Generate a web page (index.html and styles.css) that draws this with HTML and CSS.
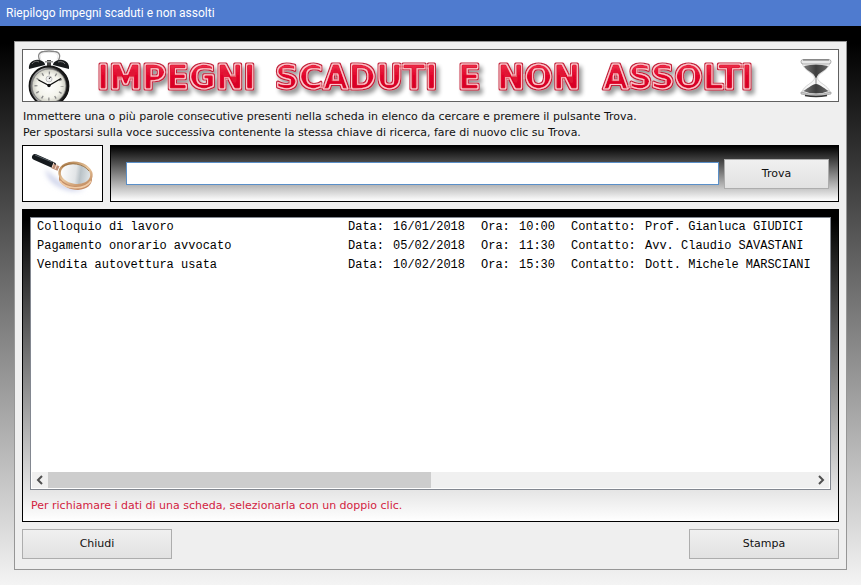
FILE: index.html
```html
<!DOCTYPE html>
<html lang="it">
<head>
<meta charset="utf-8">
<title>Riepilogo impegni scaduti e non assolti</title>
<link rel="stylesheet" href="styles.css">
</head>
<body>
<header class="titlebar">Riepilogo impegni scaduti e non assolti</header>
<main class="backdrop">
  <div class="panel">
    <div class="banner">
      <svg class="clock" viewBox="0 0 44 51" aria-hidden="true">
        <defs>
          <linearGradient id="rim" x1="0" x2="1"><stop offset="0" stop-color="#666"/><stop offset=".3" stop-color="#bbb"/><stop offset=".7" stop-color="#333"/><stop offset="1" stop-color="#111"/></linearGradient>
          <radialGradient id="dial"><stop offset="0" stop-color="#fff"/><stop offset=".7" stop-color="#f3f3eb"/><stop offset="1" stop-color="#ccccc2"/></radialGradient>
        </defs>
        <path d="M13 11C10 5 12 2 17 1.500Q22 .5 27 1.500C33 2 34 6 31 11" fill="none" stroke="#888" stroke-width="1.300"/>
        <path d="M14 10C12 5 14 3 18 2.500h8c4 .5 6 3 4 7" fill="none" stroke="#ddd" stroke-width=".7"/>
        <path d="M20 10h4v6h-4z" fill="#444"/>
        <path d="M18 11h8v1.500h-8z" fill="#999"/>
        <path d="M2 19C1 12 8 8 14 10.500c3 1 4 3 4 4.500z" fill="#171a1c"/>
        <path d="M42 19C43 12 36 8 30 10.500c-3 1-4 3-4 4.500z" fill="#171a1c"/>
        <path d="M5 14c2-3 5-3 7-2M31 12c3-1 6 0 7 2" fill="none" stroke="#777"/>
        <circle cx="22" cy="36" r="20" fill="url(#rim)"/>
        <circle cx="22" cy="36" r="19.500" fill="none" stroke="#151515" stroke-width="1.800"/>
        <circle cx="22" cy="36" r="17" fill="url(#dial)" stroke="#777" stroke-width=".8"/>
        <circle cx="22" cy="36" r="13" fill="none" stroke="#888" stroke-width="3" stroke-dasharray="1.300 5.507" stroke-dashoffset=".65"/>
        <circle cx="22" cy="29" r="3" fill="#eee" stroke="#aaa" stroke-width=".7"/>
        <path d="m22 29 1.500-2" stroke="#222"/>
        <path d="M11.500 30 22 35.500 34 28.500" fill="none" stroke="#111" stroke-width="1.400"/>
        <circle cx="22" cy="35.500" r="1.700" fill="#111"/>
      </svg>
      <svg class="headline" viewBox="0 0 701 51" role="img" aria-label="Impegni scaduti e non assolti">
        <defs>
          <filter id="tube" x="-2%" y="-30%" width="104%" height="180%">
            <feMorphology in="SourceAlpha" operator="erode" radius="1" result="mid"/>
            <feFlood flood-color="#ffc4ce"/><feComposite in2="mid" operator="in" result="line"/>
            <feMorphology in="SourceAlpha" operator="erode" radius="2" result="core"/>
            <feComposite in="SourceGraphic" in2="core" operator="in" result="fill"/>
            <feFlood flood-color="#c4203a"/><feComposite in2="SourceAlpha" operator="in" result="edge"/>
            <feGaussianBlur in="SourceAlpha" stdDeviation="2"/><feOffset dx="3" dy="4"/>
            <feComponentTransfer result="shade"><feFuncA type="linear" slope=".4"/></feComponentTransfer>
            <feMerge><feMergeNode in="shade"/><feMergeNode in="edge"/><feMergeNode in="line"/><feMergeNode in="fill"/></feMerge>
          </filter>
          <linearGradient id="red" x2="0" y2="1"><stop offset="0" stop-color="#f24a5e"/><stop offset=".45" stop-color="#e3052b"/><stop offset="1" stop-color="#c80022"/></linearGradient>
        </defs>
        <text class="headline-text" y="39" filter="url(#tube)"><tspan x="14">IMPEGNI</tspan> <tspan x="192">SCADUTI</tspan> <tspan x="375">E</tspan> <tspan x="414">NON</tspan> <tspan x="520">ASSOLTI</tspan></text>
      </svg>
      <svg class="hourglass" viewBox="0 0 32 40" aria-hidden="true">
        <defs><linearGradient id="sand" x1="0" x2="1"><stop offset="0" stop-color="#777"/><stop offset=".5" stop-color="#3e3e3e"/><stop offset="1" stop-color="#666"/></linearGradient></defs>
        <path d="M2 5C4 13 14 15 14.500 20 14 25 4 27 2 34q14 5 28 0C28 27 18 25 17.500 20 18 15 28 13 30 5z" fill="#f6f6f6" stroke="#ccc" stroke-width=".8"/>
        <path d="M4 8q12-3 24 0C26 13 18 14 16.500 20h-1C14 14 6 13 4 8z" fill="url(#sand)"/>
        <path d="M16 19v9" stroke="#888"/>
        <path d="M3 33c3-1 9-7 13-7s10 6 13 7q-13 5-26 0z" fill="url(#sand)"/>
        <rect x="1" y="1.500" width="30" height="4.500" rx="2.200" fill="#e9e9e9" stroke="#999" stroke-width=".8"/>
        <path d="M3 2h26" stroke="#666"/>
        <path d="M1 34q15 5 30 0v2q-15 4-30 0z" fill="#ccc" stroke="#999" stroke-width=".7"/>
        <path d="M5 37.500q11 2 22 0" fill="none" stroke="#333" stroke-width="1.500"/>
      </svg>
    </div>

    <label class="hint" for="query">Immettere una o più parole consecutive presenti nella scheda in elenco da cercare e premere il pulsante Trova.<br>Per spostarsi sulla voce successiva contenente la stessa chiave di ricerca, fare di nuovo clic su Trova.</label>

    <form class="search-row" onsubmit="return false">
      <div class="lens-box">
        <svg class="lens" viewBox="0 0 79 55" aria-hidden="true">
          <defs>
            <linearGradient id="brass" x2="1" y2="1"><stop offset="0" stop-color="#a87543"/><stop offset=".5" stop-color="#e9c69c"/><stop offset="1" stop-color="#b98055"/></linearGradient>
            <linearGradient id="glass" x1="0" x2="1"><stop offset="0" stop-color="#fff"/><stop offset=".5" stop-color="#e2e5e7"/><stop offset=".65" stop-color="#b9c2c7"/><stop offset="1" stop-color="#e6eaec"/></linearGradient>
            <filter id="soft" x="-30%" y="-30%" width="160%" height="160%"><feGaussianBlur stdDeviation="2.500"/></filter>
          </defs>
          <path d="M22 23q4 18 27 22l13-1-24-7z" fill="#c9cfe8" filter="url(#soft)"/>
          <path d="M12 11 30 19" stroke="#15191d" stroke-width="6" stroke-linecap="round"/>
          <path d="m12 9 17 7" stroke="#59636a"/>
          <path d="m29.500 20 6 2.500" stroke="#bc8b73" stroke-width="5"/>
          <path d="m31 16.500-2 5M34 18l-2 5" stroke="#f3dac9"/>
          <path d="M36 28v6c3 6 11 10 19 10 9-1 14-5 14-11v-5z" fill="#c58e66"/>
          <ellipse cx="52.500" cy="28" rx="16" ry="11" transform="rotate(8 52.500 28)" fill="url(#glass)" stroke="url(#brass)" stroke-width="2.500"/>
          <path d="M37 35c5 8 24 10 31 0" fill="none" stroke="#f0cba6" stroke-width="1.500"/>
          <path d="M39 21c8-6 22-3 27 4" fill="none" stroke="#8f6737" stroke-width=".8"/>
        </svg>
      </div>
      <div class="search-box">
        <input class="query" id="query" type="text" autocomplete="off">
        <button class="btn find" type="submit">Trova</button>
      </div>
    </form>

    <section class="results">
      <div class="listbox">
        <table class="items">
          <tbody>
            <tr><td class="subject">Colloquio di lavoro</td><td class="key-date">Data:</td><td class="date">16/01/2018</td><td class="key-time">Ora:</td><td class="time">10:00</td><td class="key-contact">Contatto:</td><td>Prof. Gianluca GIUDICI</td></tr>
            <tr><td class="subject">Pagamento onorario avvocato</td><td class="key-date">Data:</td><td class="date">05/02/2018</td><td class="key-time">Ora:</td><td class="time">11:30</td><td class="key-contact">Contatto:</td><td>Avv. Claudio SAVASTANI</td></tr>
            <tr><td class="subject">Vendita autovettura usata</td><td class="key-date">Data:</td><td class="date">10/02/2018</td><td class="key-time">Ora:</td><td class="time">15:30</td><td class="key-contact">Contatto:</td><td>Dott. Michele MARSCIANI</td></tr>
          </tbody>
        </table>
        <div class="scrollbar">
          <button class="arrow" type="button" aria-label="Scorri a sinistra"><svg viewBox="0 0 16 16"><path d="m10 4-4 4 4 4"/></svg></button>
          <div class="track"><div class="thumb"></div></div>
          <button class="arrow" type="button" aria-label="Scorri a destra"><svg viewBox="0 0 16 16"><path d="m6 4 4 4-4 4"/></svg></button>
        </div>
      </div>
      <p class="note">Per richiamare i dati di una scheda, selezionarla con un doppio clic.</p>
    </section>

    <footer class="actions">
      <button class="btn wide" type="button">Chiudi</button>
      <button class="btn wide" type="button">Stampa</button>
    </footer>
  </div>
</main>
</body>
</html>
```
FILE: styles.css
```css
* { box-sizing: border-box; }

body {
  margin: 0;
  min-height: 100vh;
  display: flex;
  flex-direction: column;
  font: 11px/16px "DejaVu Sans", Verdana, sans-serif;
  color: #111;
}

.titlebar {
  height: 26px;
  padding: 0 6px;
  background: #4f7bcf;
  color: #fff;
  font: 12px/26px Roboto, "Segoe UI", sans-serif;
}

.backdrop {
  flex: 1;
  display: flex;
  padding: 15px 14px;
  background: linear-gradient(#000, #000 3%, #f4f4f4);
}

.panel {
  flex: 1;
  min-width: 0;
  display: flex;
  flex-direction: column;
  gap: 7px;
  padding: 7px 7px 10px;
  border: 1px solid #969696;
  background: #efefef;
}

.banner {
  display: flex;
  align-items: center;
  justify-content: space-between;
  height: 53px;
  padding: 0 6px 0 4px;
  border: 1px solid #606060;
  background: #fff;
}

.clock { width: 44px; height: 51px; }
.headline { flex: 1; min-width: 0; height: 51px; margin: 0 16px 0 12px; }
.hourglass { width: 32px; height: 40px; margin-top: 4px; }

.headline-text {
  font: bold 33px "DejaVu Sans", Verdana, sans-serif;
  fill: url(#red);
  stroke: #df1835;
  stroke-width: 3;
  stroke-linejoin: round;
}

.hint { padding: 0 1px; margin-bottom: -3px; }

.search-row { display: flex; gap: 7px; height: 57px; }

.lens-box {
  width: 81px;
  border: 1px solid #000;
  background: #fff;
}

.lens { display: block; width: 79px; height: 55px; }

.search-box {
  flex: 1;
  min-width: 0;
  display: flex;
  align-items: center;
  gap: 5px;
  padding: 0 9px 0 15px;
  border: 1px solid #000;
  background: linear-gradient(#000, #fff);
}

.query {
  flex: 1;
  min-width: 0;
  height: 23px;
  padding: 0 4px;
  border: 1px solid #5a8fc8;
  background: #fff;
  font: inherit;
  outline: none;
}

.btn {
  height: 30px;
  padding: 0;
  border: 1px solid #adadad;
  background: linear-gradient(#f0f0f0, #e2e2e2);
  color: #111;
  font: inherit;
}

.find { width: 105px; }
.wide { width: 150px; }

.results {
  flex: 1;
  display: flex;
  flex-direction: column;
  padding: 7px 7px 0;
  border: 1px solid #000;
  background: linear-gradient(#000, #000 3%, #fff);
}

.listbox {
  flex: 1;
  display: flex;
  flex-direction: column;
  justify-content: space-between;
  border: 1px solid #828790;
  background: #fff;
  overflow: hidden;
}

.items {
  width: 100%;
  table-layout: fixed;
  border-collapse: collapse;
  margin-left: 6px;
  font: 12px/19px "Liberation Mono", "Courier New", monospace;
  color: #000;
  white-space: nowrap;
}

.items td { padding: 0; }
.subject { width: 311px; }
.key-date { width: 45px; }
.date { width: 88px; }
.key-time { width: 38px; }
.time { width: 52px; }
.key-contact { width: 74px; }

.scrollbar {
  display: flex;
  height: 17px;
  padding: 0 1px 1px 1px;
}

.arrow {
  width: 16px;
  padding: 0;
  border: 0;
  background: #f0f0f0;
}

.arrow svg { display: block; width: 16px; height: 16px; fill: none; stroke: #505050; stroke-width: 2; }
.track { flex: 1; background: #f0f0f0; }
.thumb { width: 50%; height: 100%; background: #cdcdcd; }

.note { margin: 0; padding: 8px 1px 7px; color: #d2233f; }

.actions { display: flex; justify-content: space-between; }
```
